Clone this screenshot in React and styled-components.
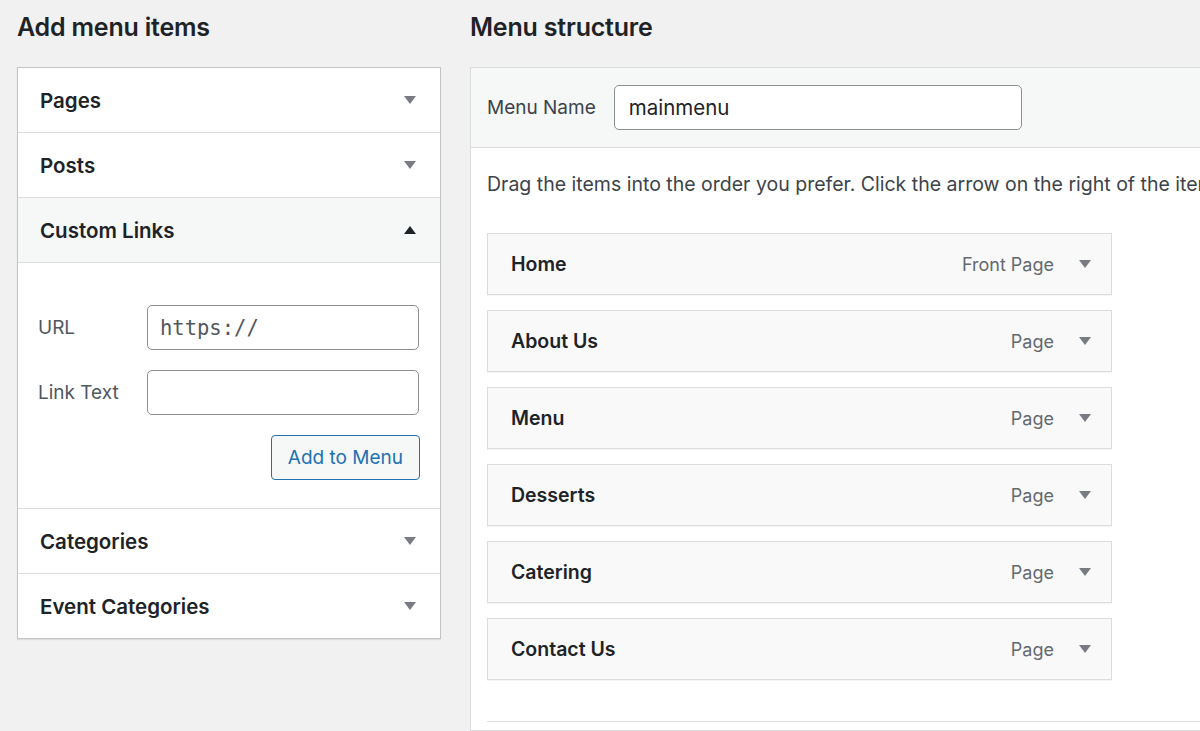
import React from "react";
import styled, { createGlobalStyle } from "styled-components";

const Global = createGlobalStyle`
  html, body { margin: 0; padding: 0; background: #f1f1f1; }
  body {
    font-family: Inter, "Noto Sans", "Liberation Sans", sans-serif;
    color: #1d2327;
    overflow: hidden;
  }
`;

const Page = styled.div`
  display: grid;
  grid-template-columns: 424px 1fr;
  column-gap: 29px;
  padding: 0 0 0 17px;
  height: 731px;
  overflow: hidden;
`;

const Column = styled.div`
  display: flex;
  flex-direction: column;
  min-width: 0;
`;

const Heading = styled.h2`
  margin: 0;
  height: 67px;
  padding-top: 11px;
  box-sizing: border-box;
  font-size: 25px;
  font-weight: 600;
  line-height: 32px;
  color: #1d2327;
  letter-spacing: -0.2px;
`;

const Accordion = styled.div`
  background: #fff;
  border: 1px solid #c3c4c7;
  box-shadow: 0 1px 1px rgba(0, 0, 0, 0.08);
`;

const SectionHead = styled.div`
  display: flex;
  align-items: center;
  justify-content: space-between;
  height: 64px;
  padding: 0 24px 0 22px;
  background: ${(p) => (p.$open ? "#f6f7f7" : "#fff")};
  border-top: ${(p) => (p.$first ? "none" : "1px solid #dcdcde")};
  font-size: 20.5px;
  font-weight: 600;
  color: #1d2327;
`;

const Arrow = styled.span`
  flex: none;
  width: 0;
  height: 0;
  border-left: 6px solid transparent;
  border-right: 6px solid transparent;
  ${(p) =>
    p.$up
      ? "border-bottom: 8px solid #1d2327;"
      : "border-top: 8px solid #787c82;"}
`;

const SectionBody = styled.div`
  border-top: 1px solid #dcdcde;
  padding: 42px 20px 28px 20px;
  display: flex;
  flex-direction: column;
  gap: 20px;
`;

const FieldRow = styled.label`
  display: flex;
  align-items: center;
  justify-content: space-between;
  padding-right: 1px;
  font-size: 19px;
  color: #50575e;
  font-weight: 400;
`;

const TextInput = styled.input`
  box-sizing: border-box;
  width: 272px;
  height: 45px;
  border: 1px solid #8c8f94;
  border-radius: 5px;
  background: #fff;
  padding: 0 12px;
  font-family: ${(p) =>
    p.$mono ? '"DejaVu Sans Mono", "Liberation Mono", monospace' : "inherit"};
  font-size: ${(p) => (p.$mono ? "20.5px" : "20.5px")};
  color: ${(p) => (p.$mono ? "#50575e" : "#1d2327")};
  outline: none;
`;

const Actions = styled.div`
  display: flex;
  justify-content: flex-end;
`;

const Button = styled.button`
  height: 45px;
  padding: 0 16px;
  border: 1px solid #2271b1;
  border-radius: 4px;
  background: #f6f7f7;
  color: #2271b1;
  font-family: inherit;
  font-size: 19px;
  cursor: pointer;
`;

const Panel = styled.div`
  background: #fff;
  border: 1px solid #dcdcde;
  border-right: none;
  flex: 1;
  display: flex;
  flex-direction: column;
`;

const PanelHeader = styled.div`
  display: flex;
  align-items: center;
  gap: 18px;
  height: 79px;
  padding: 0 16px;
  background: #f6f7f7;
  border-bottom: 1px solid #dcdcde;
  font-size: 19px;
  color: #3c434a;
`;

const NameInput = styled(TextInput)`
  width: 408px;
  height: 45px;
  padding: 0 14px;
`;

const PanelBody = styled.div`
  padding: 23px 0 0 16px;
  display: flex;
  flex-direction: column;
`;

const Hint = styled.p`
  margin: 0 0 36px;
  font-size: 19.5px;
  line-height: 26px;
  color: #3c434a;
  white-space: nowrap;
`;

const ItemList = styled.div`
  display: flex;
  flex-direction: column;
  gap: 15px;
  width: 625px;
`;

const Item = styled.div`
  box-sizing: border-box;
  height: 62px;
  display: flex;
  align-items: center;
  padding: 0 20px 0 23px;
  background: #f9f9f9;
  border: 1px solid #dcdcde;
  box-shadow: 0 1px 1px rgba(0, 0, 0, 0.04);
`;

const ItemTitle = styled.span`
  flex: 1;
  font-size: 19.5px;
  font-weight: 600;
  color: #1d2327;
`;

const ItemType = styled.span`
  font-size: 18px;
  color: #646970;
  margin-right: 25px;
`;

const Divider = styled.div`
  margin-top: 41px;
  border-top: 1px solid #dcdcde;
`;

const items = [
  { title: "Home", type: "Front Page" },
  { title: "About Us", type: "Page" },
  { title: "Menu", type: "Page" },
  { title: "Desserts", type: "Page" },
  { title: "Catering", type: "Page" },
  { title: "Contact Us", type: "Page" },
];

export default function App() {
  return (
    <>
      <Global />
      <Page>
        <Column>
          <Heading>Add menu items</Heading>
          <Accordion>
            <SectionHead $first>
              Pages <Arrow />
            </SectionHead>
            <SectionHead>
              Posts <Arrow />
            </SectionHead>
            <SectionHead $open>
              Custom Links <Arrow $up />
            </SectionHead>
            <SectionBody>
              <FieldRow>
                URL
                <TextInput $mono defaultValue="https://" />
              </FieldRow>
              <FieldRow>
                Link Text
                <TextInput />
              </FieldRow>
              <Actions>
                <Button>Add to Menu</Button>
              </Actions>
            </SectionBody>
            <SectionHead>
              Categories <Arrow />
            </SectionHead>
            <SectionHead>
              Event Categories <Arrow />
            </SectionHead>
          </Accordion>
        </Column>
        <Column>
          <Heading>Menu structure</Heading>
          <Panel>
            <PanelHeader>
              Menu Name
              <NameInput defaultValue="mainmenu" />
            </PanelHeader>
            <PanelBody>
              <Hint>
                Drag the items into the order you prefer. Click the arrow on the
                right of the item to reveal additional configuration options.
              </Hint>
              <ItemList>
                {items.map((it) => (
                  <Item key={it.title}>
                    <ItemTitle>{it.title}</ItemTitle>
                    <ItemType>{it.type}</ItemType>
                    <Arrow />
                  </Item>
                ))}
              </ItemList>
              <Divider />
            </PanelBody>
          </Panel>
        </Column>
      </Page>
    </>
  );
}
